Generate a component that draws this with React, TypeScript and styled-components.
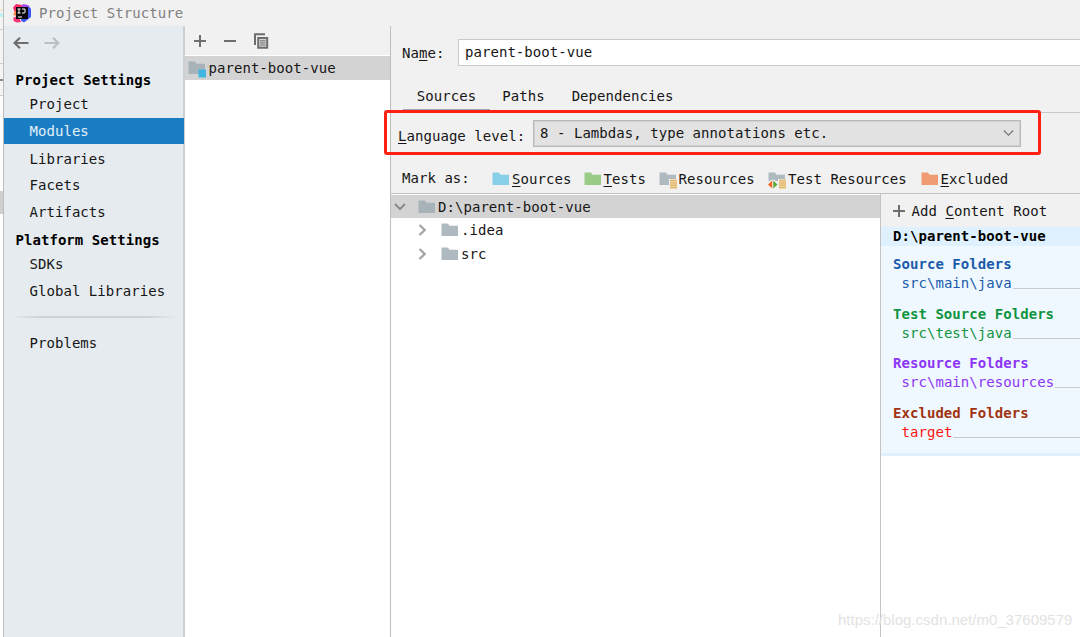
import React from "react";
import styled, { createGlobalStyle, css } from "styled-components";

const Global = createGlobalStyle`
  * { box-sizing: border-box; }
  body { margin: 0; background: #f1f1f1; overflow: hidden; }
`;

const Window = styled.div`
  position: relative;
  display: flex;
  width: 1080px;
  height: 637px;
  overflow: hidden;
  background: #f1f1f1;
  color: #161616;
  font: 14px/20px "DejaVu Sans Mono", monospace;
  letter-spacing: 0.05px;
  white-space: pre;
`;

const Backdrop = styled.div`
  display: flex;
  flex-direction: column;
  flex: none;
  width: 4px;
  border-right: 1px solid #bdbdbd;
  background: #fff;
`;
const Strip = styled.div<{ $h: number; $bg: string }>`
  height: ${(p) => p.$h}px;
  background: ${(p) => p.$bg};
`;

const Main = styled.div`
  display: flex;
  flex-direction: column;
  flex: 1;
  min-width: 0;
`;
const TitleBar = styled.header`
  display: flex;
  align-items: center;
  flex: none;
  height: 26px;
  padding-left: 8px;
  gap: 7px;
  color: #808080;
`;
const Columns = styled.div`
  display: flex;
  flex: 1;
  min-height: 0;
`;

const Sidebar = styled.nav`
  flex: none;
  width: 181px;
  border-right: 2px solid #cdd0d3;
  background: #e6ebef;
`;
const History = styled.div`
  display: flex;
  align-items: center;
  gap: 15px;
  height: 34px;
  padding-left: 9px;
  margin-bottom: 10px;
`;
const NavHeading = styled.div<{ $h: number }>`
  height: ${(p) => p.$h}px;
  line-height: ${(p) => p.$h}px;
  padding-left: 11.5px;
  color: #000;
  font-weight: bold;
`;
const NavItem = styled.div<{ $h: number; $selected?: boolean }>`
  height: ${(p) => p.$h}px;
  line-height: ${(p) => p.$h}px;
  padding-left: 25.5px;
  ${(p) =>
    p.$selected &&
    css`
      width: 180px;
      background: #1a7dc4;
      color: #e4f0f9;
    `}
`;
const Divider = styled.div`
  height: 2px;
  margin: 10px 6px 12px;
  background: linear-gradient(90deg, transparent, #cfd2d5 18%, #cfd2d5 82%, transparent);
`;

const ModuleList = styled.section`
  display: flex;
  flex-direction: column;
  flex: none;
  width: 206px;
  border-right: 1px solid #bebebe;
  background: #fff;
`;
const ListToolbar = styled.div`
  display: flex;
  align-items: center;
  height: 29px;
  margin-bottom: 1px;
  padding-left: 8px;
  background: #f1f1f1;
  gap: 16px;
`;
const ModuleRow = styled.div`
  display: flex;
  align-items: center;
  height: 24px;
  padding-left: 3px;
  gap: 2.5px;
  background: #d3d3d3;
`;

const Editor = styled.main`
  display: flex;
  flex-direction: column;
  flex: 1;
  min-width: 0;
`;
const NameRow = styled.div`
  display: flex;
  align-items: center;
  height: 27px;
  margin-top: 13px;
  padding-left: 11px;
`;
const NameLabel = styled.label`
  width: 56px;
`;
const NameField = styled.div`
  flex: 1;
  height: 27px;
  padding-left: 6px;
  border: 1px solid #c9c9c9;
  border-right: 0;
  background: #fff;
  line-height: 25px;
`;
const Mnemonic = styled.span`
  text-decoration: underline;
  text-decoration-thickness: 1px;
  text-underline-offset: 2px;
`;
const Tabs = styled.div`
  display: flex;
  height: 47px;
  padding: 17px 0 0 12px;
  border-bottom: 1px solid #c8c8c8;
`;
const Tab = styled.div<{ $w: number; $active?: boolean }>`
  width: ${(p) => p.$w}px;
  height: 27px;
  text-align: center;
  line-height: 26px;
  border-bottom: 1px solid ${(p) => (p.$active ? "#9aa7b8" : "transparent")};
`;
const LevelRow = styled.div`
  display: flex;
  height: 54px;
  padding: 7px 0 0 7px;
`;
const LevelLabel = styled.label`
  width: 135px;
  line-height: 33px;
`;
const Combo = styled.div`
  display: flex;
  align-items: center;
  justify-content: space-between;
  width: 488px;
  height: 27px;
  padding: 0 6px 1px 6px;
  border: 1px solid #b8b8b8;
  box-shadow: inset 0 0 0 1px #d2d2d2;
  background: #e2e2e2;
`;
const Highlight = styled.div`
  position: absolute;
  left: 384px;
  top: 110px;
  width: 657px;
  height: 44.5px;
  border: 3px solid #fe2113;
  border-radius: 3px;
`;
const MarkRow = styled.div`
  display: flex;
  align-items: center;
  height: 26px;
  padding: 0 0 2px 11px;
`;
const MarkLabel = styled.span`
  width: 90px;
  margin-top: -2px;
`;
const Mark = styled.span<{ $w: number }>`
  display: flex;
  align-items: center;
  gap: 2px;
  width: ${(p) => p.$w}px;
`;
const Roots = styled.div`
  display: flex;
  flex: 1;
  min-height: 0;
  border-top: 1px solid #c2c2c2;
`;
const Tree = styled.div`
  flex: none;
  width: 490px;
  padding-top: 1px;
  border-right: 1px solid #c4c4c4;
  background: #fff;
`;
const TreeRow = styled.div<{ $selected?: boolean; $indent: number; $h: number }>`
  display: flex;
  align-items: center;
  height: ${(p) => p.$h}px;
  padding-left: ${(p) => p.$indent}px;
  background: ${(p) => (p.$selected ? "#d3d3d3" : "transparent")};
  svg + svg { margin: 0 2px 0 12px; }
`;
const Content = styled.aside`
  flex: 1;
  min-width: 0;
  background: #fff;
`;
const AddRoot = styled.div`
  display: flex;
  align-items: center;
  gap: 5.5px;
  height: 33px;
  padding: 1px 0 0 11px;
  background: #f1f1f1;
`;
const RootPath = styled.div`
  height: 19px;
  padding-left: 12px;
  background: #dff1fe;
  color: #000;
  font-weight: bold;
  line-height: 19px;
`;
const RootBody = styled.div`
  height: 210px;
  padding-top: 9px;
  border-bottom: 3px solid #dff1fe;
  background: #f0f8ff;
`;
const Group = styled.div<{ $color: string }>`
  height: 49.5px;
  padding-left: 12px;
  color: ${(p) => p.$color};
  line-height: 19px;
`;
const GroupTitle = styled.div`
  font-weight: bold;
`;
const GroupPath = styled.div`
  display: flex;
  height: 19px;
  padding-left: 8.5px;
  &::after {
    content: "";
    flex: 1;
    height: 14px;
    margin-left: 1px;
    border-bottom: 1px solid #c8cccf;
  }
`;
const PathText = styled.span<{ $color?: string }>`
  color: ${(p) => p.$color ?? "inherit"};
`;
const Watermark = styled.div`
  position: absolute;
  left: 838px;
  top: 610px;
  color: #e3e3e3;
  font: 15px/20px "Liberation Sans", sans-serif;
  letter-spacing: 0;
`;

const Logo = () => (
  <svg width="20" height="20" viewBox="0 0 20 20">
    <path d="M1 4.5L4 1l6 1 2 4-5 12-5-1 2-4z" fill="#fb2d68" />
    <path d="M4 7l2 1v5l-5-1z" fill="#ff813a" />
    <path d="M10 3l6-1 3 4v8l-7 5.5-3-2z" fill="#3a57f0" />
    <path d="M9 4l2-3 5 1 1 3z" fill="#a54be8" />
    <path d="M1.5 14l5 1 3 4-5 .5-3-1.5z" fill="#f5367c" />
    <path d="M4 4h12v12H4z" fill="#0a0a0a" />
    <path d="M5.5 6h3M7 6v4M5.5 10h3M10 6h3v3q0 1-1 1h-2M6 14h4" fill="none" stroke="#fff" strokeWidth="1" />
  </svg>
);
const Arrow = ({ back }: { back?: boolean }) => (
  <svg width="16" height="14" viewBox="0 0 16 14" fill="none" stroke={back ? "#6e6e6e" : "#bcbfc2"} strokeWidth="2.2">
    <path d={back ? "M15.5 7H1.5M7 1.8L1.6 7 7 12.2" : "M.5 7h14M9 1.8L14.4 7 9 12.2"} />
  </svg>
);
const Plus = () => (
  <svg width="14" height="14" viewBox="0 0 14 14" stroke="#6e6e6e" strokeWidth="2">
    <path d="M1 7h12M7 1v12" />
  </svg>
);
const Minus = () => (
  <svg width="14" height="14" viewBox="0 0 14 14" stroke="#6e6e6e" strokeWidth="2">
    <path d="M1 7h12" />
  </svg>
);
const Copy = () => (
  <svg width="16" height="16" viewBox="0 0 16 16" fill="none" stroke="#6e6e6e">
    <path d="M2 12V1.2h10" strokeWidth="2" />
    <path d="M5.2 5h9v9.8h-9z" fill="#d5d5d5" strokeWidth="2" />
    <path d="M7 7.8h5.5M7 9.9h5.5M7 12h5.5" />
  </svg>
);
const Folder = ({ color = "#aeb9c0", badge }: { color?: string; badge?: "module" | "resource" | "test" }) => (
  <svg width="18" height="18" viewBox="0 0 18 18" overflow="visible">
    <path d="M.5 2.5h6.2l2 2.3h8.3V15H.5z" fill={color} />
    {badge === "module" && <path d="M10.5 10.5h7.5v8h-7.5z" fill="#40b6e0" />}
    {(badge === "resource" || badge === "test") && (
      <>
        <path d="M10 9h8.5v9.5H10z" fill="#f1f1f1" />
        <path d="M11 9.8h7v8.7h-7z" fill="#f0d6a4" />
        <path d="M11 10.4h7M11 12.8h7M11 15.2h7M11 17.6h7" stroke="#e0b468" strokeWidth="1.3" />
      </>
    )}
    {badge === "test" && (
      <>
        <path d="M0 11.5l4.7-2 5.3 2v7H0z" fill="#f1f1f1" />
        <path d="M4.2 10.5v8L0 14.5z" fill="#f26522" />
        <path d="M5.3 10.5v8l4.2-4z" fill="#59a831" />
      </>
    )}
  </svg>
);
const Chevron = ({ down }: { down?: boolean }) => (
  <svg width="12" height="12" viewBox="0 0 12 12" fill="none" stroke={down ? "#8c8c8c" : "#a2a2a2"} strokeWidth="2.2">
    <path d={down ? "M1 3L6 8l5-5" : "M2.5 1L7.7 6l-5.2 5"} />
  </svg>
);
const ComboArrow = () => (
  <svg width="11" height="8" viewBox="0 0 11 8" fill="none" stroke="#777" strokeWidth="1.3">
    <path d="M.8 1.5l4.7 4.7 4.7-4.7" />
  </svg>
);

const groups = [
  { title: "Source Folders", path: "src\\main\\java", color: "#1a5bab" },
  { title: "Test Source Folders", path: "src\\test\\java", color: "#0f9440" },
  { title: "Resource Folders", path: "src\\main\\resources", color: "#8b35f5" },
  { title: "Excluded Folders", path: "target", color: "#a03310", pathColor: "#ff1414" },
];

export default function App() {
  return (
    <Window>
      <Global />
      <Backdrop>
        <Strip $h={9} $bg="#f4f4f4" />
        <Strip $h={2} $bg="#f6e2d2" />
        <Strip $h={2} $bg="#f4f4f4" />
        <Strip $h={4} $bg="#c3f0f5" />
        <Strip $h={12} $bg="#f4f4f4" />
        <Strip $h={1} $bg="#cfcfcf" />
        <Strip $h={33} $bg="#f4f4f4" />
        <Strip $h={1} $bg="#cfcfcf" />
        <Strip $h={15} $bg="#f4f4f4" />
        <Strip $h={2} $bg="#8a8a8a" />
        <Strip $h={14} $bg="#f4f4f4" />
        <Strip $h={1} $bg="#cfcfcf" />
        <Strip $h={95} $bg="#fdfdfd" />
        <Strip $h={23} $bg="#cfcfcf" />
      </Backdrop>
      <Main>
        <TitleBar>
          <Logo />
          <span>Project Structure</span>
        </TitleBar>
        <Columns>
          <Sidebar>
            <History>
              <Arrow back />
              <Arrow />
            </History>
            <NavHeading $h={21}>Project Settings</NavHeading>
            <NavItem $h={27}>Project</NavItem>
            <NavItem $h={26} $selected>Modules</NavItem>
            <NavItem $h={30}>Libraries</NavItem>
            <NavItem $h={23}>Facets</NavItem>
            <NavItem $h={31}>Artifacts</NavItem>
            <NavHeading $h={24}>Platform Settings</NavHeading>
            <NavItem $h={25}>SDKs</NavItem>
            <NavItem $h={29}>Global Libraries</NavItem>
            <Divider />
            <NavItem $h={27}>Problems</NavItem>
          </Sidebar>
          <ModuleList>
            <ListToolbar>
              <Plus />
              <Minus />
              <Copy />
            </ListToolbar>
            <ModuleRow>
              <Folder badge="module" color="#a7b2b9" />
              <span>parent-boot-vue</span>
            </ModuleRow>
          </ModuleList>
          <Editor>
            <NameRow>
              <NameLabel>Na<Mnemonic>m</Mnemonic>e:</NameLabel>
              <NameField>parent-boot-vue</NameField>
            </NameRow>
            <Tabs>
              <Tab $w={87} $active>Sources</Tab>
              <Tab $w={67}>Paths</Tab>
              <Tab $w={131}>Dependencies</Tab>
            </Tabs>
            <LevelRow>
              <LevelLabel><Mnemonic>L</Mnemonic>anguage level:</LevelLabel>
              <Combo>
                <span>8 - Lambdas, type annotations etc.</span>
                <ComboArrow />
              </Combo>
            </LevelRow>
            <MarkRow>
              <MarkLabel>Mark as:</MarkLabel>
              <Mark $w={91.5}><Folder color="#87cfe8" /><span><Mnemonic>S</Mnemonic>ources</span></Mark>
              <Mark $w={75}><Folder color="#9acb86" /><span><Mnemonic>T</Mnemonic>ests</span></Mark>
              <Mark $w={109.5}><Folder badge="resource" /><span>Resources</span></Mark>
              <Mark $w={152.5}><Folder badge="test" /><span>Test Resources</span></Mark>
              <Mark $w={100}><Folder color="#f19b73" /><span><Mnemonic>E</Mnemonic>xcluded</span></Mark>
            </MarkRow>
            <Roots>
              <Tree>
                <TreeRow $selected $h={23} $indent={3}><Chevron down /><Folder color="#a7b2b9" /><span>D:\parent-boot-vue</span></TreeRow>
                <TreeRow $h={24} $indent={26}><Chevron /><Folder /><span>.idea</span></TreeRow>
                <TreeRow $h={24} $indent={26}><Chevron /><Folder /><span>src</span></TreeRow>
              </Tree>
              <Content>
                <AddRoot>
                  <Plus />
                  <span>Add <Mnemonic>C</Mnemonic>ontent Root</span>
                </AddRoot>
                <RootPath>D:\parent-boot-vue</RootPath>
                <RootBody>
                  {groups.map((g) => (
                    <Group key={g.title} $color={g.color}>
                      <GroupTitle>{g.title}</GroupTitle>
                      <GroupPath><PathText $color={g.pathColor}>{g.path}</PathText></GroupPath>
                    </Group>
                  ))}
                </RootBody>
              </Content>
            </Roots>
          </Editor>
        </Columns>
      </Main>
      <Highlight />
      <Watermark>https://blog.csdn.net/m0_37609579</Watermark>
    </Window>
  );
}
